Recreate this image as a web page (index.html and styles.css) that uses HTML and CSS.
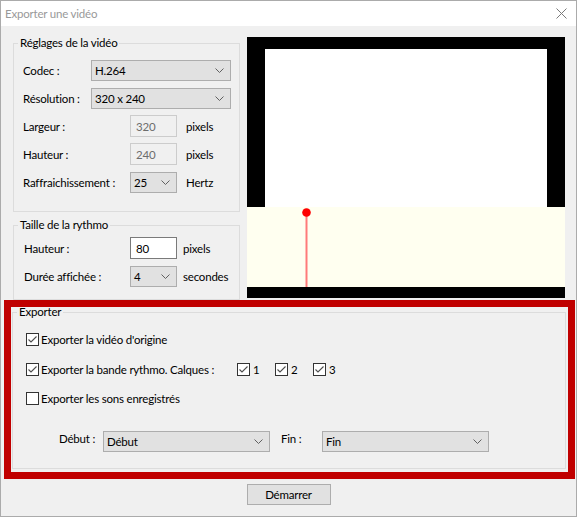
FILE: index.html
```html
<!DOCTYPE html>
<html lang="fr">
<head>
<meta charset="utf-8">
<title>Exporter une vidéo</title>
<link rel="stylesheet" href="styles.css">
</head>
<body>
<div class="window">
  <div class="titlebar">
    <span class="title">Exporter une vidéo</span>
    <svg class="close" width="11" height="11" viewBox="0 0 11 11"><path d="M0.5 0.5 L10.5 10.5 M10.5 0.5 L0.5 10.5" stroke="#7a7a7a" stroke-width="1" fill="none"/></svg>
  </div>
  <div class="content">
    <div class="top">
      <div class="leftcol">
        <fieldset class="group g1">
          <legend>Réglages de la vidéo</legend>
          <div class="rows">
            <div class="row"><span class="lbl w68">Codec :</span><div class="select w140"><span>H.264</span><svg class="chev" width="9" height="5" viewBox="0 0 9 5"><path d="M0.5 0.5 L4.5 4.5 L8.5 0.5" stroke="#606060" fill="none"/></svg></div></div>
            <div class="row"><span class="lbl w68">Résolution :</span><div class="select w140"><span>320 x 240</span><svg class="chev" width="9" height="5" viewBox="0 0 9 5"><path d="M0.5 0.5 L4.5 4.5 L8.5 0.5" stroke="#606060" fill="none"/></svg></div></div>
            <div class="row"><span class="lbl w107">Largeur :</span><div class="input disabled">320</div><span class="unit u9">pixels</span></div>
            <div class="row"><span class="lbl w107">Hauteur :</span><div class="input disabled">240</div><span class="unit u9">pixels</span></div>
            <div class="row"><span class="lbl w107">Raffraichissement :</span><div class="select w47"><span>25</span><svg class="chev" width="9" height="5" viewBox="0 0 9 5"><path d="M0.5 0.5 L4.5 4.5 L8.5 0.5" stroke="#606060" fill="none"/></svg></div><span class="unit u9">Hertz</span></div>
          </div>
        </fieldset>
        <fieldset class="group g2">
          <legend>Taille de la rythmo</legend>
          <div class="rows">
            <div class="row"><span class="lbl w106">Hauteur :</span><div class="input enabled">80</div><span class="unit u6">pixels</span></div>
            <div class="row"><span class="lbl w106">Durée affichée :</span><div class="select w47"><span>4</span><svg class="chev" width="9" height="5" viewBox="0 0 9 5"><path d="M0.5 0.5 L4.5 4.5 L8.5 0.5" stroke="#606060" fill="none"/></svg></div><span class="unit u6">secondes</span></div>
          </div>
        </fieldset>
      </div>
      <div class="preview">
        <div class="video"><div class="frame"></div></div>
        <div class="rythmo">
          <svg width="318" height="80" viewBox="0 0 318 80">
            <line x1="59.5" y1="5" x2="59.5" y2="80" stroke="#ff7a7a" stroke-width="2"/>
            <circle cx="59.5" cy="5.5" r="4.3" fill="#ff0000"/>
          </svg>
        </div>
        <div class="pbottom"></div>
      </div>
    </div>
    <div class="highlight">
      <fieldset class="group g3">
        <legend>Exporter</legend>
        <div class="rows3">
          <div class="cbrow r1"><span class="cb"><svg width="11" height="11" viewBox="0 0 11 11"><path d="M1.5 5.5 L4 8 L9.5 2.5" stroke="#4d4d4d" stroke-width="1.1" fill="none"/></svg></span><span class="cblbl">Exporter la vidéo d'origine</span></div>
          <div class="cbrow r2"><span class="cb"><svg width="11" height="11" viewBox="0 0 11 11"><path d="M1.5 5.5 L4 8 L9.5 2.5" stroke="#4d4d4d" stroke-width="1.1" fill="none"/></svg></span><span class="cblbl wide">Exporter la bande rythmo. Calques :</span>
            <span class="layer"><span class="cb"><svg width="11" height="11" viewBox="0 0 11 11"><path d="M1.5 5.5 L4 8 L9.5 2.5" stroke="#4d4d4d" stroke-width="1.1" fill="none"/></svg></span><span class="laylbl">1</span></span>
            <span class="layer"><span class="cb"><svg width="11" height="11" viewBox="0 0 11 11"><path d="M1.5 5.5 L4 8 L9.5 2.5" stroke="#4d4d4d" stroke-width="1.1" fill="none"/></svg></span><span class="laylbl">2</span></span>
            <span class="layer"><span class="cb"><svg width="11" height="11" viewBox="0 0 11 11"><path d="M1.5 5.5 L4 8 L9.5 2.5" stroke="#4d4d4d" stroke-width="1.1" fill="none"/></svg></span><span class="laylbl">3</span></span>
          </div>
          <div class="cbrow r3"><span class="cb"></span><span class="cblbl">Exporter les sons enregistrés</span></div>
          <div class="rangerow">
            <span class="rlbl deb">Début :</span>
            <div class="select w167"><span>Début</span><svg class="chev" width="9" height="5" viewBox="0 0 9 5"><path d="M0.5 0.5 L4.5 4.5 L8.5 0.5" stroke="#606060" fill="none"/></svg></div>
            <span class="rlbl fin">Fin :</span>
            <div class="select w167"><span>Fin</span><svg class="chev" width="9" height="5" viewBox="0 0 9 5"><path d="M0.5 0.5 L4.5 4.5 L8.5 0.5" stroke="#606060" fill="none"/></svg></div>
          </div>
        </div>
      </fieldset>
    </div>
    <div class="actions"><button class="btn" type="button">Démarrer</button></div>
  </div>
</div>
</body>
</html>
```
FILE: styles.css
```css
* { box-sizing: border-box; }
html, body { margin: 0; padding: 0; }
body {
  font-family: "Lato", "Liberation Sans", sans-serif;
  font-size: 11.5px;
  letter-spacing: -0.2px;
  color: #000;
  background: #f0f0f0;
}
.window {
  width: 577px;
  height: 517px;
  border: 1px solid #ababab;
  background: #f0f0f0;
  display: flex;
  flex-direction: column;
}
.titlebar {
  height: 25px;
  flex: none;
  background: #fff;
  display: flex;
  align-items: center;
  justify-content: space-between;
  padding: 0 9px 0 4px;
}
.title { color: #999; }
.close { display: block; }
.content { flex: 1; display: flex; flex-direction: column; }
.top { display: flex; gap: 7px; padding-left: 12px; }
.leftcol { width: 227px; display: flex; flex-direction: column; margin-top: 9px; }
.group {
  border: 1px solid #dcdcdc;
  margin: 0;
  padding: 0;
  min-width: 0;
}
.group legend {
  padding: 0 2px;
  margin-left: 4px;
  line-height: 16px;
}
.rows { display: flex; flex-direction: column; gap: 6px; }
.g1 .rows { padding: 8px 0 18px 9px; }
.g2 { margin-top: 5px; }
.g2 .rows { padding: 4px 0 12px 10px; }
.row { display: flex; align-items: center; height: 22px; }
.lbl { flex: none; }
.w68 { width: 68px; }
.w107 { width: 107px; }
.w106 { width: 106px; }
.select {
  height: 21px;
  border: 1px solid #adadad;
  background: #e1e1e1;
  display: flex;
  align-items: center;
  padding: 0 6px 0 3px;
  flex: none;
}
.select span { flex: 1; white-space: nowrap; }
.chev { display: block; flex: none; }
.w140 { width: 140px; }
.w47 { width: 47px; }
.w167 { width: 167px; }
.input {
  width: 47px;
  height: 22px;
  padding: 0 5px;
  display: flex;
  align-items: center;
  flex: none;
}
.input.disabled { border: 1px solid #cccccc; background: #f0f0f0; color: #6d6d6d; }
.input.enabled { border: 1px solid #7a7a7a; background: #fff; color: #000; }
.unit.u9 { margin-left: 9px; }
.unit.u6 { margin-left: 6px; }
.preview {
  width: 318px;
  height: 261px;
  margin-top: 11px;
  background: #000;
  display: flex;
  flex-direction: column;
}
.video { height: 170px; padding: 12px 18px 0; flex: none; }
.frame { background: #fff; height: 100%; }
.rythmo { height: 80px; background: #fffff0; flex: none; }
.rythmo svg { display: block; }
.pbottom { flex: 1; }
.highlight {
  width: 571px;
  height: 179px;
  margin-left: 3px;
  border: 7px solid #c00000;
  display: flex;
  flex-direction: column;
}
.g3 { flex: 1; margin: -3px 2px 3px 1px; }
.rows3 { padding: 11px 0 0 13px; display: flex; flex-direction: column; }
.cbrow { display: flex; align-items: center; height: 16px; }
.r2 { margin-top: 14px; }
.r3 { margin-top: 13px; }
.cb {
  width: 13px;
  height: 13px;
  border: 1px solid #333;
  background: #fff;
  flex: none;
  display: flex;
  align-items: center;
  justify-content: center;
}
.cb svg { display: block; }
.cblbl { margin-left: 2px; white-space: nowrap; }
.cblbl.wide { width: 196px; flex: none; }
.layer { display: flex; align-items: center; width: 38px; flex: none; }
.laylbl { margin-left: 3px; }
.rangerow { display: flex; align-items: flex-start; margin-top: 25px; height: 21px; }
.rlbl { line-height: 16px; flex: none; }
.deb { margin-left: 33px; width: 44px; }
.fin { margin-left: 11px; width: 41px; }
.actions { display: flex; justify-content: center; padding-top: 5px; }
.btn {
  width: 84px;
  height: 21px;
  border: 1px solid #adadad;
  background: #e1e1e1;
  font-family: inherit;
  font-size: inherit;
  letter-spacing: inherit;
  color: #000;
  padding: 0;
  margin: 0;
}
```
